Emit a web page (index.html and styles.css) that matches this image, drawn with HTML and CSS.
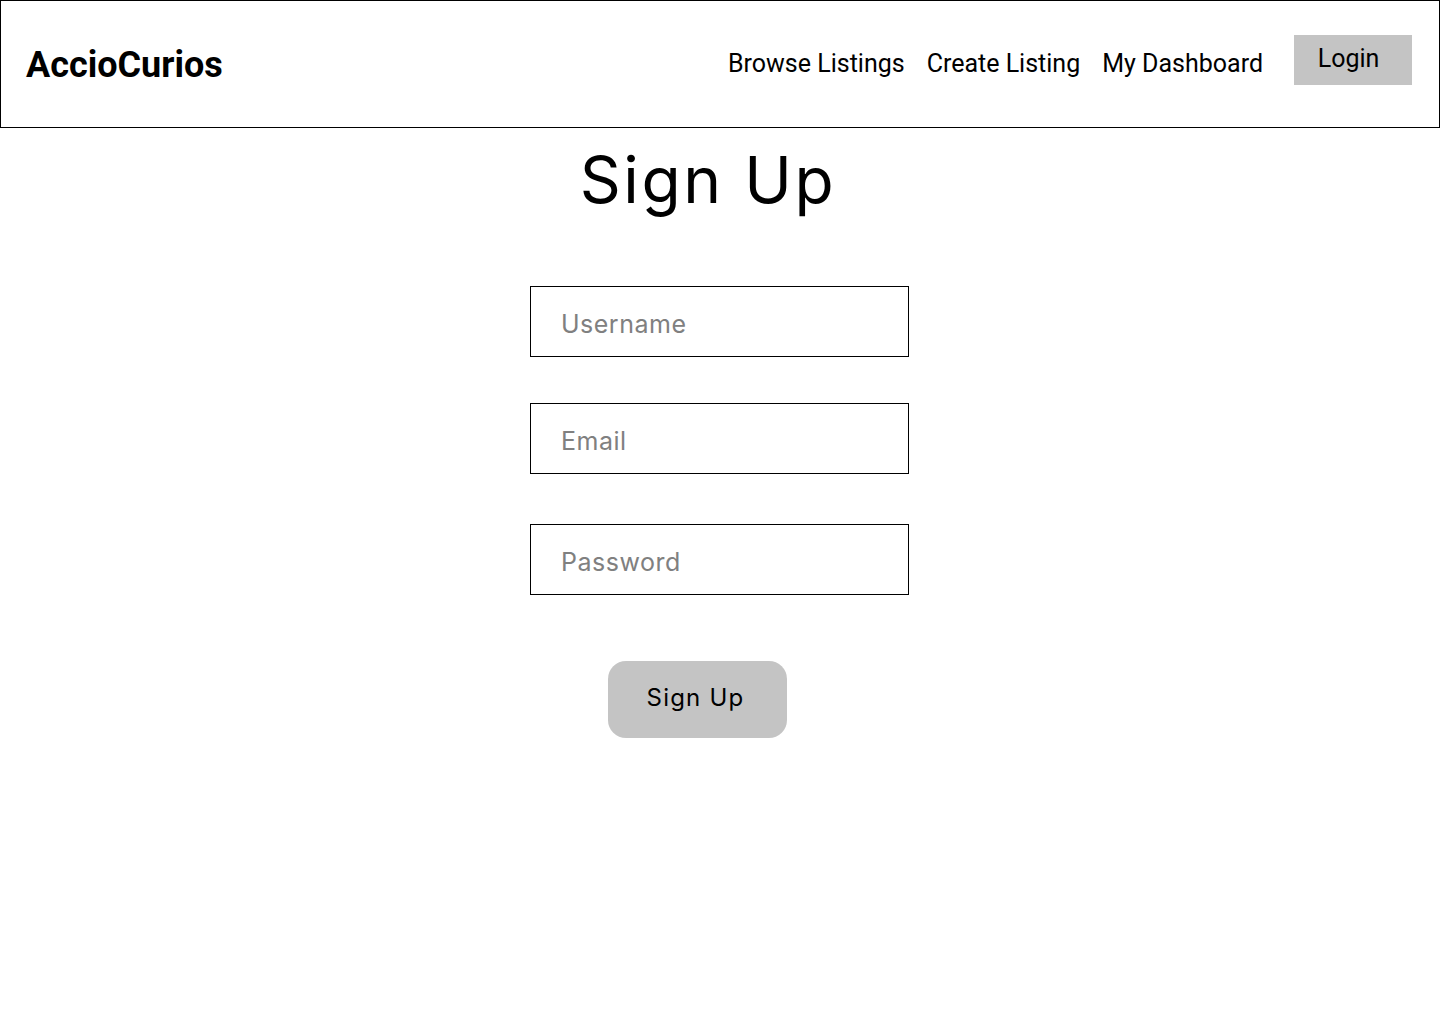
FILE: index.html
```html
<!DOCTYPE html>
<html lang="en">
<head>
<meta charset="utf-8">
<title>AccioCurios – Sign Up</title>
<link rel="stylesheet" href="styles.css">
</head>
<body>
<header class="topbar">
  <div class="logo">AccioCurios</div>
  <nav class="nav">
    <a class="nav-link" href="#">Browse Listings</a>
    <a class="nav-link" href="#">Create Listing</a>
    <a class="nav-link" href="#">My Dashboard</a>
    <a class="login-btn" href="#">Login</a>
  </nav>
</header>
<main class="page">
  <h1 class="title">Sign Up</h1>
  <form class="form">
    <div class="field field-user"><span class="placeholder">Username</span></div>
    <div class="field field-email"><span class="placeholder">Email</span></div>
    <div class="field field-pass"><span class="placeholder">Password</span></div>
    <button class="submit" type="button">Sign Up</button>
  </form>
</main>
</body>
</html>
```
FILE: styles.css
```css
* { box-sizing: border-box; }
html, body { margin: 0; padding: 0; background: #fff; }
body { font-family: Roboto, "Liberation Sans", sans-serif; color: #000; }

.topbar {
  height: 128px;
  border: 1px solid #000;
  display: flex;
  align-items: center;
  justify-content: space-between;
  padding: 0 27px 0 25px;
}
.logo {
  font-family: Roboto, sans-serif;
  font-weight: 700;
  font-size: 36px;
  line-height: 1;
  margin-top: 1px;
}
.nav {
  display: flex;
  align-items: center;
}
.nav-link {
  font-size: 25px;
  color: #000;
  text-decoration: none;
  margin-right: 22px;
  line-height: 1;
  margin-top: -2px;
}
.nav-link:nth-child(3) { margin-right: 31px; }
.login-btn {
  width: 118px;
  height: 50px;
  background: #c4c4c4;
  color: #000;
  text-decoration: none;
  font-size: 25px;
  display: flex;
  align-items: center;
  justify-content: center;
  padding: 0 9px 4px 0;
  margin-top: -8px;
}

.page {
  display: flex;
  flex-direction: column;
  align-items: center;
}
.title {
  font-family: Inter, "Open Sans", sans-serif;
  font-weight: 400;
  font-size: 64px;
  letter-spacing: 2.6px;
  line-height: 1;
  margin: 20px 24px 0 0;
}
.form {
  width: 379px;
  margin: 74px 1px 0 0;
  display: flex;
  flex-direction: column;
  align-items: flex-start;
}
.field {
  width: 379px;
  height: 71px;
  border: 1px solid #000;
  display: flex;
  align-items: center;
  padding: 4px 0 0 30px;
}
.field-email { margin-top: 46px; }
.field-pass { margin-top: 50px; }
.placeholder {
  font-family: Inter, "Open Sans", sans-serif;
  font-size: 25px;
  letter-spacing: 0.5px;
  color: #808080;
}
.submit {
  margin: 66px 0 0 78px;
  width: 179px;
  height: 77px;
  border: 0;
  border-radius: 18px;
  background: #c4c4c4;
  font-family: Inter, "Open Sans", sans-serif;
  font-size: 24px;
  letter-spacing: 1.2px;
  color: #000;
  padding: 0 4px 5px 0;
}
```
